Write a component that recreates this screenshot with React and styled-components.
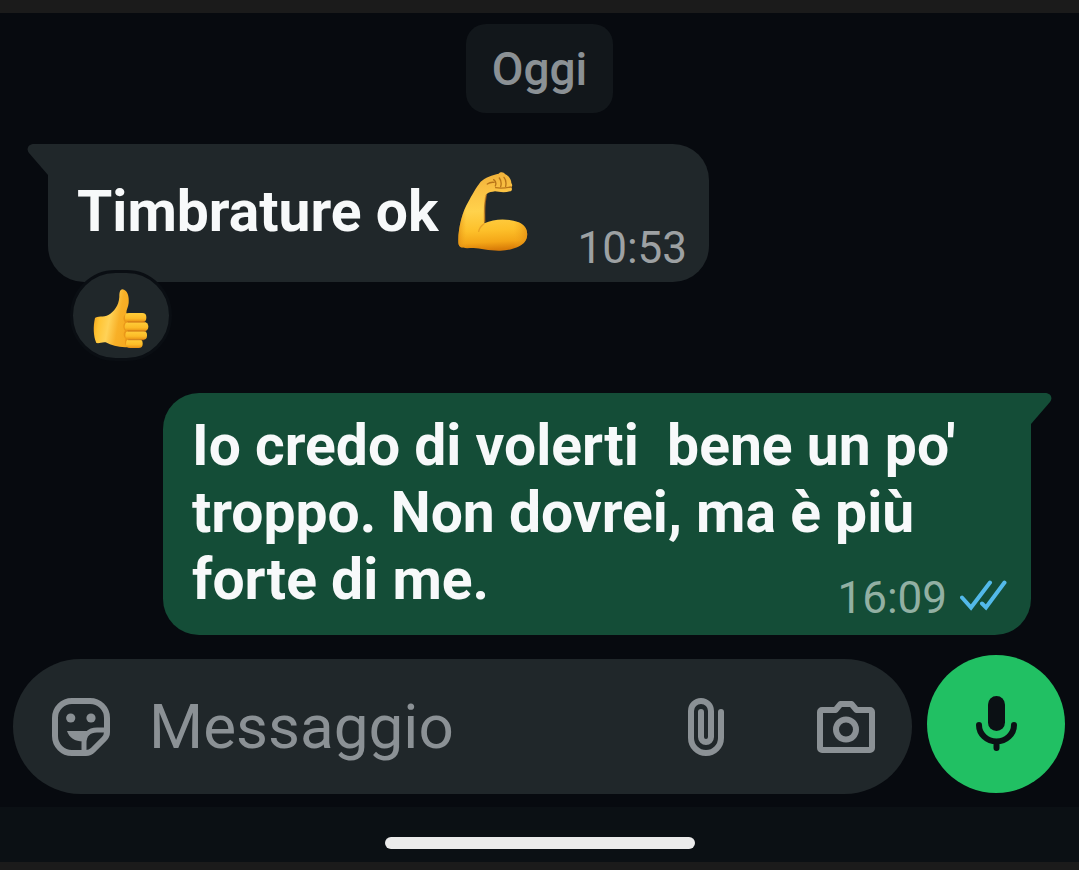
import React, { useState } from 'react';
import styled, { createGlobalStyle, css } from 'styled-components';

const GlobalStyle = createGlobalStyle`
  *, *::before, *::after {
    box-sizing: border-box;
  }

  body {
    margin: 0;
    background: #070a0f;
    font-family: Roboto, "Liberation Sans", sans-serif;
  }
`;

const Screen = styled.div`
  display: flex;
  flex-direction: column;
  min-height: 100vh;
  border-top: 13px solid #1b1b1b;
  border-bottom: 8px solid #1b1b1b;
  background: #070a0f;
`;

const Conversation = styled.main`
  display: flex;
  flex: 1;
  flex-direction: column;
  padding: 11px 48px 20px;
`;

const DayLabel = styled.div`
  align-self: center;
  margin-bottom: 31px;
  padding: 19px 26px 17px;
  border-radius: 20px;
  background: #12171b;
  color: #8b9195;
  font-size: 46px;
  font-weight: 500;
  line-height: 53px;
`;

const incoming = css`
  display: flex;
  align-self: flex-start;
  margin-bottom: 111px;
  padding: 27px 22px 30px 29px;
  border-radius: 0 36px 36px 36px;
  background: #20272a;
  color: #20272a;
`;

const outgoing = css`
  align-self: flex-end;
  padding: 19px 24px 22px 29px;
  border-radius: 36px 0 36px 36px;
  background: #144d37;
  color: #144d37;
`;

const Bubble = styled.article`
  position: relative;
  max-width: 868px;
  ${({ $own }) => ($own ? outgoing : incoming)}
`;

const Tail = styled.svg`
  position: absolute;
  top: 0;
  ${({ $own }) => ($own ? 'left: 100%; transform: scaleX(-1);' : 'right: 100%;')}
  width: 21px;
  height: 32px;
  fill: currentColor;
`;

const MessageText = styled.div`
  ${({ $own }) => !$own && 'display: flex; align-items: center; gap: 19px;'}
  color: #f7f9fa;
  font-size: 57px;
  font-weight: 700;
  line-height: 67px;
  white-space: pre-wrap;
`;

const Meta = styled.div`
  display: flex;
  align-items: center;
  align-self: flex-end;
  gap: 13px;
  margin: 0 0 -26px 48px;
  color: #9da1a3;
  font-size: 44px;
  font-weight: 400;
  line-height: 60px;

  ${({ $own }) =>
    $own &&
    css`
      float: right;
      margin: 22px 0 -16px 24px;
      color: #92b0a3;
    `}
`;

const Reaction = styled.button`
  position: absolute;
  bottom: -79px;
  left: 22px;
  display: flex;
  align-items: center;
  justify-content: center;
  width: 102px;
  height: 91px;
  padding: 6px 0 0;
  border: 3px solid #0a0e13;
  border-radius: 46px;
  background: #20272a;
`;

const Composer = styled.form`
  display: flex;
  align-items: flex-end;
  gap: 15px;
  padding: 0 14px 13px 13px;
`;

const Field = styled.div`
  display: flex;
  flex: 1;
  align-items: center;
  min-width: 0;
  height: 135px;
  padding: 0 37px 0 39px;
  border-radius: 68px;
  background: #20272a;
`;

const TextInput = styled.input`
  flex: 1;
  min-width: 0;
  margin: 0 36px 0 39px;
  padding: 0;
  border: 0;
  outline: 0;
  background: none;
  color: #f7f9fa;
  font-family: inherit;
  font-size: 62px;
  line-height: 76px;

  &::placeholder {
    color: #8b9195;
    opacity: 1;
  }
`;

const IconButton = styled.button`
  display: flex;
  flex: none;
  padding: 0;
  border: 0;
  background: none;
  color: #8b9195;

  & + & {
    margin-left: 93px;
  }
`;

const MicButton = styled.button`
  display: flex;
  flex: none;
  align-items: center;
  justify-content: center;
  width: 138px;
  height: 138px;
  margin-bottom: 1px;
  padding: 0 0 2px;
  border: 0;
  border-radius: 50%;
  background: #21c063;
  color: #0b1014;
`;

const NavBar = styled.footer`
  display: flex;
  justify-content: center;
  padding: 30px 0 13px;
  background: #0b1014;
`;

const Handle = styled.div`
  width: 310px;
  height: 12px;
  border-radius: 6px;
  background: #ebebeb;
`;

const BubbleTail = ({ own }) => (
  <Tail $own={own} viewBox="0 0 21 32" aria-hidden="true">
    <path d="M21 0H7C1 0-1 5 2 9l19 22z" />
  </Tail>
);

const Muscle = () => (
  <svg width="72" height="81" viewBox="50 60 216 243" role="img" aria-label="💪">
    <defs>
      <linearGradient id="arm" x1="0.2" y1="0" x2="0.25" y2="1">
        <stop offset="0" stopColor="#efb03a" />
        <stop offset="0.25" stopColor="#fbc243" />
        <stop offset="0.5" stopColor="#ffd24c" />
        <stop offset="0.75" stopColor="#fdc02a" />
        <stop offset="0.9" stopColor="#f4a617" />
        <stop offset="1" stopColor="#d97c08" />
      </linearGradient>
      <linearGradient id="forearm" x1="0" y1="0" x2="1" y2="0">
        <stop offset="0" stopColor="#e08b12" stopOpacity="0.7" />
        <stop offset="0.12" stopColor="#f2a81e" stopOpacity="0" />
        <stop offset="0.8" stopColor="#f2a81e" stopOpacity="0" />
        <stop offset="1" stopColor="#e08b12" stopOpacity="0.7" />
      </linearGradient>
    </defs>
    <path
      id="arm-shape"
      fill="url(#arm)"
      d="M54 268c0-40 13-88 30-116 10-18 24-44 37-60 12-11 36-21 54-24 5-6 15-6 20 2 10 4 18 15 18 26 4 6 3 10 0 13 4 6 1 12-4 12-15 5-35 2-45 0-9 2-18 2-25 8-7 22-7 45-6 62 0 13 0 20-1 26 30-15 73-15 103-3 23 10 30 30 23 50-8 22-43 34-78 35-30 1-60-7-80-8-15 0-30 2-40-3-6-4-6-10-6-20z"
    />
    <path
      fill="url(#forearm)"
      d="M54 268c0-40 13-88 30-116 10-18 24-44 37-60 12-11 36-21 54-24 5-6 15-6 20 2 10 4 18 15 18 26 4 6 3 10 0 13 4 6 1 12-4 12-15 5-35 2-45 0-9 2-18 2-25 8-7 22-7 45-6 62 0 13 0 20-1 26 30-15 73-15 103-3 23 10 30 30 23 50-8 22-43 34-78 35-30 1-60-7-80-8-15 0-30 2-40-3-6-4-6-10-6-20z"
    />
    <path
      fill="none"
      stroke="#c97817"
      strokeWidth="5"
      strokeLinecap="round"
      d="M137 134c-5 28-5 52-4 78"
      opacity="0.6"
    />
    <path
      fill="none"
      stroke="#e09420"
      strokeWidth="4"
      strokeLinecap="round"
      d="M131 218c-8 6-14 13-16 23"
      opacity="0.7"
    />
    <path
      fill="none"
      stroke="#a8610f"
      strokeWidth="4"
      strokeLinecap="round"
      strokeLinejoin="round"
      d="M160 86c7 5 8 12 5 19m12-24c6 8 7 16 4 26m10-28c6 7 7 17 5 27M166 110c15 3 31 1 46-2M141 99c7-5 13-6 20-5"
      opacity="0.8"
    />
  </svg>
);

const ThumbsUp = () => (
  <svg width="56" height="60" viewBox="216 445 168 180" role="img" aria-label="👍">
    <defs>
      <linearGradient id="palm" x1="0" y1="0.3" x2="1" y2="0.6">
        <stop offset="0" stopColor="#ee9d18" />
        <stop offset="0.2" stopColor="#ffc433" />
        <stop offset="0.45" stopColor="#ffd257" />
        <stop offset="0.7" stopColor="#f8b027" />
        <stop offset="1" stopColor="#f5a91f" />
      </linearGradient>
      <linearGradient id="finger" x1="0" y1="0" x2="0" y2="1">
        <stop offset="0" stopColor="#ffcd3a" />
        <stop offset="0.6" stopColor="#fcbb27" />
        <stop offset="1" stopColor="#e78e14" />
      </linearGradient>
    </defs>
    <path
      fill="url(#palm)"
      d="M222 532c5-6 27-2 40-9 17-10 31-27 33-54 0-14 2-22 9-23 15 2 21 20 19 41-1 12-7 20-7 30l12 8v94c-30 4-54-4-74-14-10-2-18 4-28 2-9-20-10-50-4-75z"
    />
    <path fill="#e28a14" opacity="0.6" d="M312 522c-7 8-5 17 0 23-7 8-6 18 0 25-6 8-5 17 2 24-4 9-2 17 4 24h10v-96z" />
    <g fill="url(#finger)">
      <rect x="312" y="517" width="64" height="27" rx="12" />
      <rect x="311" y="544" width="71" height="28" rx="13" />
      <rect x="313" y="571" width="65" height="26" rx="12" />
      <rect x="315" y="596" width="50" height="26" rx="12" />
    </g>
    <path
      fill="none"
      stroke="#cf7b16"
      strokeWidth="4"
      strokeLinecap="round"
      d="M321 544h50M321 571h53M323 597h44"
      opacity="0.8"
    />
  </svg>
);

const ReadTicks = () => (
  <svg
    width="47"
    height="36"
    viewBox="960 580 47 36"
    fill="none"
    stroke="#53b9e9"
    strokeWidth="4"
    strokeLinecap="round"
    role="img"
    aria-label="✓✓"
  >
    <path d="M962 597.5l9 10L990 582.500M982 603.500l4 4L1004.500 582.500" />
  </svg>
);

const StickerIcon = () => (
  <svg width="58" height="58" viewBox="0 0 58 58" aria-hidden="true">
    <g fill="none" stroke="currentColor" strokeWidth="6">
      <path d="M20 3h18a17 17 0 0 1 17 17v14c0 3-1 5-3 7L41 52c-2 2-4 3-7 3H20A17 17 0 0 1 3 38V20A17 17 0 0 1 20 3z" />
      <path d="M55 32H45c-8 0-13 5-13 13v10" strokeWidth="5" />
    </g>
    <g fill="currentColor">
      <circle cx="18.700" cy="20" r="4.600" />
      <circle cx="39" cy="20" r="4.600" />
      <path d="M15 33h23l-7 10.500c-8 0-14-4-16-10.500z" />
    </g>
  </svg>
);

const AttachIcon = () => (
  <svg width="36" height="58" viewBox="0 0 36 58" aria-hidden="true">
    <path
      d="M33 14v26a15 15 0 0 1-30 0V13a10 10 0 0 1 20 0v26a5 5 0 0 1-10 0V14"
      fill="none"
      stroke="currentColor"
      strokeWidth="6"
      strokeLinecap="round"
    />
  </svg>
);

const CameraIcon = () => (
  <svg width="58" height="58" viewBox="0 -3 58 58" aria-hidden="true">
    <g fill="none" stroke="currentColor" strokeWidth="6" strokeLinejoin="round">
      <path d="M5 9h13.500l5-6h11l5 6H53a2 2 0 0 1 2 2v36a2 2 0 0 1-2 2H5a2 2 0 0 1-2-2V11a2 2 0 0 1 2-2z" />
      <circle cx="29" cy="28.500" r="10" />
    </g>
  </svg>
);

const MicIcon = () => (
  <svg width="41" height="55" viewBox="0 0 41 55" aria-hidden="true">
    <rect x="12" y="0" width="17" height="35" rx="8.500" fill="currentColor" />
    <path
      d="M3 29a17.500 16.500 0 0 0 35 0M20.500 45.500V52"
      fill="none"
      stroke="currentColor"
      strokeWidth="6"
      strokeLinecap="round"
    />
  </svg>
);

const App = () => {
  const [draft, setDraft] = useState('');

  return (
    <>
      <GlobalStyle />
      <Screen>
        <Conversation>
          <DayLabel>Oggi</DayLabel>

          <Bubble>
            <BubbleTail />
            <MessageText>
              Timbrature ok
              <Muscle />
            </MessageText>
            <Meta>
              <time dateTime="10:53">10:53</time>
            </Meta>
            <Reaction type="button">
              <ThumbsUp />
            </Reaction>
          </Bubble>

          <Bubble $own>
            <BubbleTail own />
            <MessageText $own>
              {"Io credo di volerti  bene un po' troppo. Non dovrei, ma è più forte di me."}
              <Meta $own>
                <time dateTime="16:09">16:09</time>
                <ReadTicks />
              </Meta>
            </MessageText>
          </Bubble>
        </Conversation>

        <Composer onSubmit={e => e.preventDefault()}>
          <Field>
            <IconButton type="button" aria-label="Sticker">
              <StickerIcon />
            </IconButton>
            <TextInput
              aria-label="Messaggio"
              placeholder="Messaggio"
              value={draft}
              onChange={e => setDraft(e.target.value)}
            />
            <IconButton type="button" aria-label="Allega">
              <AttachIcon />
            </IconButton>
            <IconButton type="button" aria-label="Fotocamera">
              <CameraIcon />
            </IconButton>
          </Field>
          <MicButton type="button" aria-label="Messaggio vocale">
            <MicIcon />
          </MicButton>
        </Composer>

        <NavBar>
          <Handle />
        </NavBar>
      </Screen>
    </>
  );
};

export default App;
